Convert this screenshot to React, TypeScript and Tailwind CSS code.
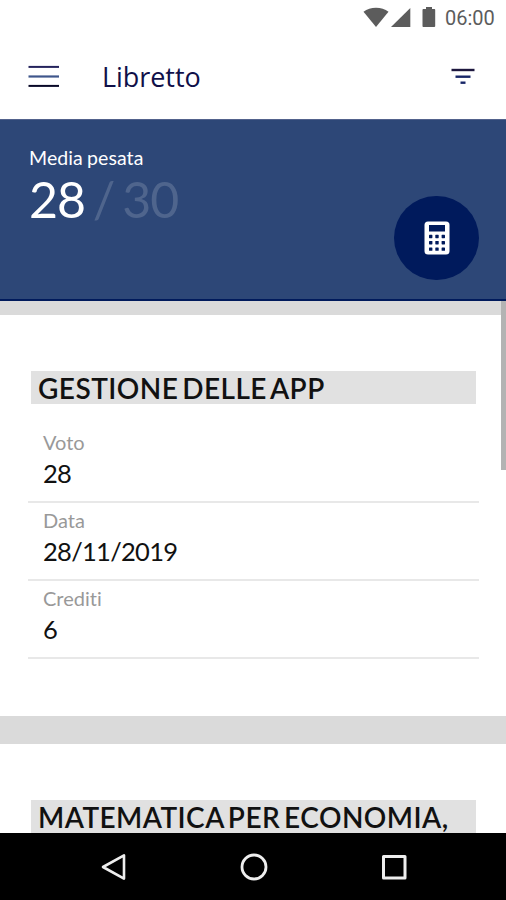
interface Exam {
  name: string;
  fields: { label: string; value: string }[];
}

const exams: Exam[] = [
  {
    name: "GESTIONE DELLE APP",
    fields: [
      { label: "Voto", value: "28" },
      { label: "Data", value: "28/11/2019" },
      { label: "Crediti", value: "6" },
    ],
  },
  { name: "MATEMATICA PER ECONOMIA,", fields: [] },
];

function StatusBar() {
  return (
    <div className="h-[35px] shrink-0 flex items-start justify-end pr-[10px] pt-[7px] text-[#5c5c5c]">
      <svg className="w-[26px] h-[21px]" viewBox="0 0 26 21" fill="currentColor">
        <path d="M0.5 4.8C4 2 8.2 0.8 13 0.8s9 1.2 12.5 4L13 20z" />
      </svg>
      <svg className="w-5 h-[21px] ml-0.5" viewBox="0 0 20 21" fill="currentColor">
        <path d="M0 20L19.3 1v19z" />
      </svg>
      <svg className="w-[14px] h-[21px] ml-[11px]" viewBox="0 0 14 21" fill="currentColor">
        <path d="M4 0h6v2h2.200c.6 0 1 .4 1 1v16.200c0 .5-.4 .8-1 .8H1.500c-.5 0-1-.3-1-.8V3c0-.6.5-1 1-1H4z" />
      </svg>
      <span className="ml-[9px] w-[51px] whitespace-nowrap font-['Roboto',sans-serif] text-[20px] leading-[23px]">
        06:00
      </span>
    </div>
  );
}

function Header() {
  return (
    <header className="h-[84px] shrink-0 flex items-center pl-7 pr-[31px] text-[#101049]">
      <svg className="w-[31px] h-6" viewBox="0 0 31 24">
        <path d="M0.500 1.900H31" stroke="#24235c" strokeWidth="2" />
        <path d="M0.500 11.500H31" stroke="#3f568b" strokeWidth="2.200" />
        <path d="M0.500 20.900H31" stroke="#080827" strokeWidth="2" />
      </svg>
      <h1 className="ml-[43px] font-['Open_Sans',sans-serif] text-[27px] leading-8 tracking-[-0.05px]">
        Libretto
      </h1>
      <svg className="ml-auto w-6 h-[18px]" viewBox="0 0 24 18" strokeWidth="2.400">
        <path d="M0.500 2H23.500" stroke="#1d173e" />
        <path d="M4.500 8.700H19.500" stroke="#172567" />
        <path d="M9.500 14.700H14.500" stroke="#172567" />
      </svg>
    </header>
  );
}

function Average() {
  return (
    <section className="relative h-[182px] shrink-0 bg-[#2d4777] border-t border-t-[#52628c] border-b-2 border-b-[#001a5c] pl-[29px] pt-[26px] text-white">
      <p className="text-[19.5px] leading-6 tracking-[0.1px] [word-spacing:-1px]">Media pesata</p>
      <p className="text-[50px] leading-[58px] whitespace-pre tracking-[-1px] [word-spacing:-4px]">
        28<span className="text-[#4f658d]"> / 30</span>
      </p>
      <button className="absolute left-[394px] top-[76px] w-[85px] h-[84px] rounded-full bg-[#001a5c] flex items-center justify-center">
        <svg className="w-[26px] h-[34px]" viewBox="0 0 26 34">
          <rect x="0.500" y="0.500" width="25" height="33" rx="3.500" fill="#fff" />
          <g fill="#001a5c">
            <rect x="5" y="4" width="16" height="6.500" />
            {[5, 11.3, 17.6].map((x) =>
              [13.8, 20, 26.4].map((y) => (
                <rect key={`${x}-${y}`} x={x} y={y} width="3.400" height="3.400" rx="0.600" />
              ))
            )}
          </g>
        </svg>
      </button>
    </section>
  );
}

function ExamCard({ exam }: { exam: Exam }) {
  return (
    <article className="bg-white pt-14 pb-[57px] pl-[28px] pr-[27px]">
      <h2 className="ml-[3px] mr-[3px] h-[33px] pl-[7px] bg-[#e1e1e1] text-[28px] leading-[34px] font-semibold whitespace-nowrap text-[#111] tracking-[0.45px] [word-spacing:-3.5px]">
        {exam.name}
      </h2>
      <div className="mt-[21px]">
        {exam.fields.map((f) => (
          <div key={f.label} className="h-[78px] border-b-2 border-[#e8e8e8] pl-[15px] pt-[5px]">
            <div className="text-[20px] leading-6 text-[#999]">{f.label}</div>
            <div className="mt-[3px] text-[25.5px] leading-8 tracking-[-0.7px] text-[#111]">{f.value}</div>
          </div>
        ))}
      </div>
    </article>
  );
}

function NavBar() {
  return (
    <nav className="h-[67px] shrink-0 bg-black flex items-center pl-[100px] pr-[98px] justify-between">
      <svg className="w-7 h-7" viewBox="0 0 28 28" fill="none" stroke="#eee" strokeWidth="2.600">
        <path d="M3 14L24 2.400v23.200z" strokeLinejoin="round" />
      </svg>
      <svg className="w-7 h-7" viewBox="0 0 28 28" fill="none" stroke="#eee" strokeWidth="2.800">
        <circle cx="14" cy="14" r="12" />
      </svg>
      <svg className="w-7 h-7" viewBox="0 0 28 28" fill="none" stroke="#eee" strokeWidth="3">
        <rect x="3.500" y="3.500" width="21.500" height="21.500" strokeLinejoin="round" />
      </svg>
    </nav>
  );
}

export default function App() {
  return (
    <div className="w-[506px] h-[900px] flex flex-col overflow-hidden bg-white font-['Lato',sans-serif] [font-variant-ligatures:none]">
      <StatusBar />
      <Header />
      <Average />
      <main className="relative flex-1 min-h-0 overflow-hidden bg-[#dadada] pt-3.5 flex flex-col gap-7">
        {exams.map((exam) => (
          <ExamCard key={exam.name} exam={exam} />
        ))}
        {/* scrollbar */}
        <div className="absolute right-0 top-0 w-[5px] h-[169px] bg-[#b3b3b3]" />
      </main>
      <NavBar />
    </div>
  );
}
